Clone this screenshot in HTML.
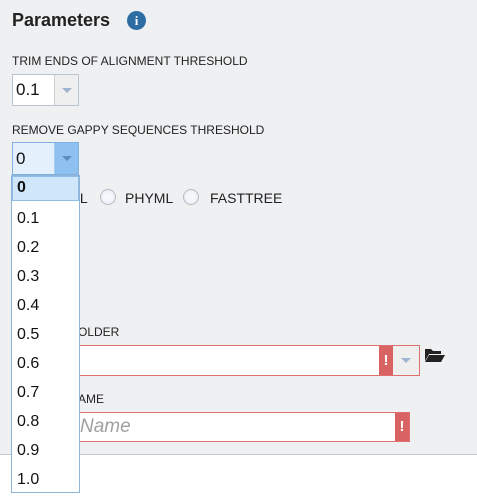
<!DOCTYPE html>
<html><head><style>
*{margin:0;padding:0;box-sizing:border-box}
body{width:477px;height:497px;overflow:hidden;background:#fff;font-family:"Liberation Sans",sans-serif;position:relative}
.bg{position:absolute;left:0;top:0;width:477px;height:455px;background:#eff0f2;border-bottom:1px solid #c8c8c8}
.a{position:absolute}
.lbl{font-size:12px;color:#222}
.radio{width:16px;height:16px;border-radius:50%;border:1px solid #b8bcc2;background:radial-gradient(circle,#f4f8fc 40%,#dde4ea 100%)}
.item{position:absolute;left:5px;font-size:16px;color:#111}
</style></head><body>
<div class="bg"></div>
<div class="a" style="left:12px;top:10px;font-size:18px;font-weight:bold;color:#222">Parameters</div>
<div class="a" style="left:127px;top:11px;width:19px;height:19px;border-radius:50%;background:#2e6da4;color:#fff;font:bold 13px 'Liberation Serif',serif;text-align:center;line-height:19px">i</div>
<div class="a lbl" style="left:12px;top:54px">TRIM ENDS OF ALIGNMENT THRESHOLD</div>
<div class="a" style="left:12px;top:74px;width:67px;height:32px;border:1px solid #b8c4d0;background:#fff">
 <div class="a" style="left:3px;top:5px;font-size:17px;color:#111">0.1</div>
 <div class="a" style="left:41px;top:0;width:24px;height:30px;background:#efefef;border-left:1px solid #d0d0d0"></div>
 <div class="a" style="left:49px;top:13px;border:5px solid transparent;border-top:5px solid #9fb4d0"></div>
</div>
<div class="a lbl" style="left:12px;top:123px">REMOVE GAPPY SEQUENCES THRESHOLD</div>
<div class="a" style="left:12px;top:142px;width:67px;height:33px;border:1px solid #7fb0e0;background:#e4f0fc">
 <div class="a" style="left:3px;top:6px;font-size:17px;color:#111">0</div>
 <div class="a" style="left:41px;top:0;width:24px;height:31px;background:#8ec0f0;border-left:1px solid #aacdee"></div>
 <div class="a" style="left:49px;top:13px;border:5px solid transparent;border-top:5px solid #5c8cc0"></div>
</div>
<div class="a lbl" style="left:76px;top:190px;font-size:14px">IL</div>
<div class="a radio" style="left:100px;top:189px"></div>
<div class="a lbl" style="left:125px;top:190px;font-size:14px">PHYML</div>
<div class="a radio" style="left:183px;top:189px"></div>
<div class="a lbl" style="left:210px;top:190px;font-size:14px">FASTTREE</div>
<div class="a lbl" style="left:78px;top:325px">OLDER</div>
<div class="a" style="left:60px;top:345px;width:360px;height:31px;border:1px solid #e07070;background:#fff">
 <div class="a" style="left:318px;top:0;width:14px;height:29px;background:#d96262;color:#fff;font-weight:bold;font-size:15px;text-align:center;line-height:29px">!</div>
 <div class="a" style="left:332px;top:0;width:26px;height:29px;background:#efefef"></div>
 <div class="a" style="left:340px;top:12px;border:5px solid transparent;border-top:5px solid #9fb4d0"></div>
</div>
<svg class="a" style="left:424px;top:347px" width="22" height="16" viewBox="0 0 22 16"><path d="M1 2h6l2 2h8v3H5L1 14z" fill="#222"/><path d="M5 8h16l-4 7H1z" fill="#222"/></svg>
<div class="a lbl" style="left:78px;top:392px">AME</div>
<div class="a" style="left:60px;top:412px;width:350px;height:30px;border:1px solid #e07070;background:#fff">
 <div class="a" style="left:19px;top:3px;font-size:19px;font-style:italic;color:#a0a0a0">Name</div>
 <div class="a" style="left:334px;top:0;width:14px;height:28px;background:#d96262;color:#fff;font-weight:bold;font-size:15px;text-align:center;line-height:28px">!</div>
</div>
<div class="a" style="left:11px;top:175px;width:69px;height:318px;border:1px solid #8fb4d8;background:#fff">
 <div class="a" style="left:0;top:0;width:67px;height:25px;background:#d0e6fb;border:1px solid #90bce8"></div>
 <div class="item" style="top:3px;font-weight:bold">0</div>
 <div class="item" style="top:34px">0.1</div>
 <div class="item" style="top:63px">0.2</div>
 <div class="item" style="top:92px">0.3</div>
 <div class="item" style="top:121px">0.4</div>
 <div class="item" style="top:150px">0.5</div>
 <div class="item" style="top:179px">0.6</div>
 <div class="item" style="top:208px">0.7</div>
 <div class="item" style="top:237px">0.8</div>
 <div class="item" style="top:266px">0.9</div>
 <div class="item" style="top:295px">1.0</div>
</div>
</body></html>
